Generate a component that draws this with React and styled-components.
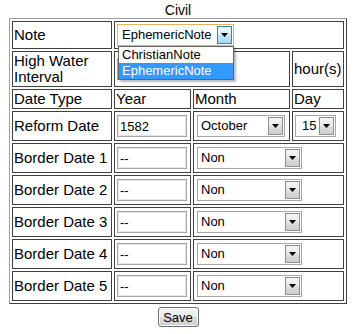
import React from "react";
import styled, { createGlobalStyle } from "styled-components";

const Global = createGlobalStyle`
  html, body { margin: 0; padding: 0; background: #fff; }
  body { font-family: "Liberation Sans", Arial, sans-serif; color: #000; }
`;

const Form = styled.div`
  padding-left: 9px;
  width: 338px;
`;

const Table = styled.table`
  box-sizing: border-box;
  width: 338px;
  table-layout: fixed;
  border-collapse: separate;
  border-spacing: 2px;
  border: 1px solid;
  border-color: #a0a0a0 #404040 #404040 #a0a0a0;
`;

const Caption = styled.caption`
  caption-side: top;
  text-align: center;
  font: 14px/15px "Liberation Sans", Arial, sans-serif;
  height: 15px;
  padding-top: 3px;
`;

const Col = styled.col`
  width: ${(p) => p.$w}px;
`;

const Row = styled.tr`
  height: ${(p) => p.$h}px;
`;

const Cell = styled.td`
  border: 1px solid #404040;
  padding: 1px;
  vertical-align: middle;
  text-align: left;
  font: 15px/16px "Liberation Sans", Arial, sans-serif;
  white-space: ${(p) => (p.$nowrap ? "nowrap" : "normal")};
`;

const TextInput = styled.input`
  box-sizing: border-box;
  width: 70px;
  height: 22px;
  margin: 0 0 0 1px;
  padding: 0 0 0 2px;
  border: 1px solid #a5a5a5;
  box-shadow: inset 0 0 0 1px #e4e4e4;
  font: 13px "Liberation Sans", Arial, sans-serif;
  color: #000;
  vertical-align: middle;
  outline: none;
`;

const Combo = styled.div`
  position: relative;
  display: inline-flex;
  align-items: center;
  box-sizing: border-box;
  width: ${(p) => p.$w}px;
  height: 22px;
  margin-left: ${(p) => p.$ml}px;
  border: 1px solid ${(p) => (p.$focus ? "#e1b65f" : "#a7a7a7")};
  background: #fff;
  font: 13px/16px "Liberation Sans", Arial, sans-serif;
  color: #000;
  vertical-align: middle;
`;

const ComboText = styled.span`
  flex: 1;
  padding-left: ${(p) => p.$pl}px;
  white-space: nowrap;
  overflow: hidden;
`;

const ArrowBtn = styled.span`
  box-sizing: border-box;
  width: 15px;
  height: 18px;
  margin-right: 1px;
  display: flex;
  align-items: center;
  justify-content: center;
  border: 1px solid ${(p) => (p.$focus ? "#3c7fb1" : "#8f8f8f")};
  background: ${(p) =>
    p.$focus
      ? "linear-gradient(#eaf6fd, #d9f0fc 50%, #bee6fd 50%, #a7d9f5)"
      : "linear-gradient(#f2f2f2, #ebebeb 50%, #dddddd 50%, #cfcfcf)"};
`;

const List = styled.div`
  position: absolute;
  left: 0px;
  top: 21px;
  width: 116px;
  box-sizing: border-box;
  border: 1px solid #646464;
  background: #fff;
  box-shadow: 2px 2px 2px rgba(0, 0, 0, 0.28);
  z-index: 2;
`;

const Item = styled.div`
  height: 16px;
  line-height: 16px;
  padding-left: 3px;
  font: 13px/16px "Liberation Sans", Arial, sans-serif;
  background: ${(p) => (p.$sel ? "#3399ff" : "#fff")};
  color: ${(p) => (p.$sel ? "#fff" : "#000")};
  white-space: nowrap;
`;

const ButtonRow = styled.div`
  width: 338px;
  text-align: center;
  padding-top: 3px;
`;

const SaveButton = styled.button`
  box-sizing: border-box;
  width: 41px;
  height: 20px;
  padding: 0;
  border: 1px solid #707070;
  border-radius: 3px;
  background: linear-gradient(#f2f2f2, #ebebeb 50%, #dddddd 50%, #cfcfcf);
  box-shadow: inset 0 0 0 1px #fbfbfb;
  font: 13px "Liberation Sans", Arial, sans-serif;
  color: #000;
`;

const Triangle = () => (
  <svg width="7" height="4" viewBox="0 0 7 4">
    <polygon points="0,0 7,0 3.5,4" fill="#000" />
  </svg>
);

function Select({ value, w, ml = 2, pl = 3, focus, options }) {
  return (
    <Combo $w={w} $ml={ml} $focus={focus}>
      <ComboText $pl={pl}>{value}</ComboText>
      <ArrowBtn $focus={focus}>
        <Triangle />
      </ArrowBtn>
      {options && (
        <List>
          {options.map((o) => (
            <Item key={o} $sel={o === value}>
              {o}
            </Item>
          ))}
        </List>
      )}
    </Combo>
  );
}

const borderRows = [1, 2, 3, 4, 5];

export default function App() {
  return (
    <>
      <Global />
      <Form>
        <Table>
          <Caption>Civil</Caption>
          <colgroup>
            <Col $w={100} />
            <Col $w={77} />
            <Col $w={97} />
            <Col $w={52} />
          </colgroup>
          <tbody>
            <Row $h={28}>
              <Cell>Note</Cell>
              <Cell colSpan={3}>
                <Select
                  value="EphemericNote"
                  w={117}
                  ml={1}
                  pl={4}
                  focus
                  options={["ChristianNote", "EphemericNote"]}
                />
              </Cell>
            </Row>
            <Row $h={36}>
              <Cell>High Water Interval</Cell>
              <Cell colSpan={2}>
                <TextInput defaultValue="" />
              </Cell>
              <Cell $nowrap>hour(s)</Cell>
            </Row>
            <Row $h={20}>
              <Cell $nowrap>Date Type</Cell>
              <Cell>Year</Cell>
              <Cell>Month</Cell>
              <Cell>Day</Cell>
            </Row>
            <Row $h={30}>
              <Cell $nowrap>Reform Date</Cell>
              <Cell>
                <TextInput defaultValue="1582" />
              </Cell>
              <Cell>
                <Select value="October" w={88} />
              </Cell>
              <Cell>
                <Select value="15" w={41} ml={1} pl={6} />
              </Cell>
            </Row>
            {borderRows.map((n) => (
              <Row key={n} $h={30}>
                <Cell $nowrap>Border Date {n}</Cell>
                <Cell>
                  <TextInput defaultValue="--" />
                </Cell>
                <Cell colSpan={2}>
                  <Select value="Non" w={105} />
                </Cell>
              </Row>
            ))}
          </tbody>
        </Table>
        <ButtonRow>
          <SaveButton>Save</SaveButton>
        </ButtonRow>
      </Form>
    </>
  );
}
